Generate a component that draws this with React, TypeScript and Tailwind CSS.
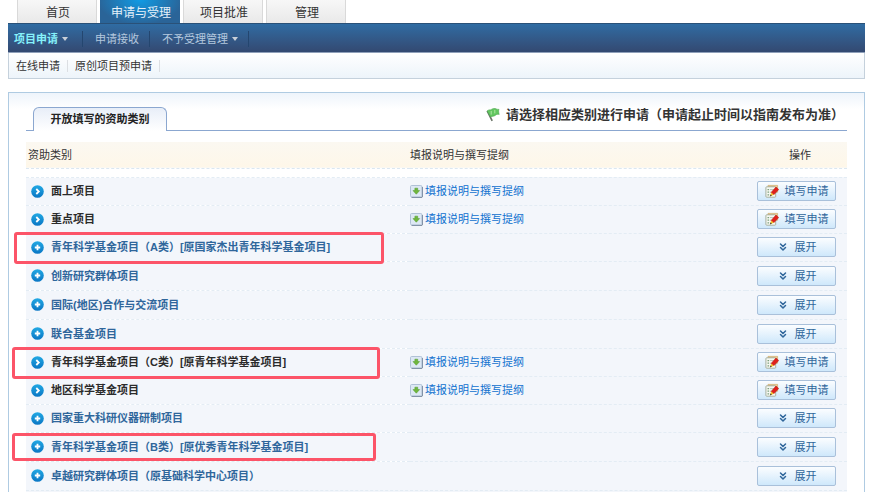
import { ChevronsDown } from 'lucide-react';

interface Category {
  name: string;
  kind: 'leaf' | 'group';
  // position of the red marker frame around the name
  marker?: string;
}

const TABS = ['首页', '申请与受理', '项目批准', '管理'];

const MENU = [
  { label: '项目申请', hasMenu: true },
  { label: '申请接收', hasMenu: false },
  { label: '不予受理管理', hasMenu: true },
];

const SUBMENU = ['在线申请', '原创项目预申请'];

const CATEGORIES: Category[] = [
  { name: '面上项目', kind: 'leaf' },
  { name: '重点项目', kind: 'leaf' },
  { name: '青年科学基金项目（A类）[原国家杰出青年科学基金项目]', kind: 'group', marker: '-left-3 -top-0.5 h-8 w-[370px]' },
  { name: '创新研究群体项目', kind: 'group' },
  { name: '国际(地区)合作与交流项目', kind: 'group' },
  { name: '联合基金项目', kind: 'group' },
  { name: '青年科学基金项目（C类）[原青年科学基金项目]', kind: 'leaf', marker: '-left-3.5 -top-0.5 h-8 w-[368px]' },
  { name: '地区科学基金项目', kind: 'leaf' },
  { name: '国家重大科研仪器研制项目', kind: 'group' },
  { name: '青年科学基金项目（B类）[原优秀青年科学基金项目]', kind: 'group', marker: '-left-3.5 top-0 h-7 w-[364px]' },
  { name: '卓越研究群体项目（原基础科学中心项目）', kind: 'group' },
];

function BulletIcon({ kind }: { kind: Category['kind'] }) {
  return (
    <svg viewBox="0 0 13 13" className="size-[13px] shrink-0" aria-hidden="true">
      <defs>
        <linearGradient id={`bullet-${kind}`} x1="0" y1="0" x2="0" y2="1">
          <stop offset="0" stopColor="#22a9e4" />
          <stop offset="1" stopColor="#0a76c4" />
        </linearGradient>
      </defs>
      <circle cx="6.5" cy="6.5" r="6.3" fill={`url(#bullet-${kind})`} />
      {kind === 'group' ? (
        <path d="M6.5 3.8v5.4M3.8 6.5h5.4" stroke="#fff" strokeWidth="1.8" fill="none" />
      ) : (
        <path d="M5.3 4l2.5 2.5L5.3 9" stroke="#fff" strokeWidth="1.8" fill="none" />
      )}
    </svg>
  );
}

function DownloadIcon() {
  return (
    <svg viewBox="0 0 13 13" className="size-[13px] shrink-0" aria-hidden="true">
      <path d="M1.6 12.4h9.8a1 1 0 0 0 1-1V2" stroke="#56677d" strokeWidth="1" fill="none" />
      <rect x="0.5" y="0.5" width="11.4" height="11.4" rx="1.2" fill="#dde8f4" stroke="#b0c1d6" />
      <path d="M4.9 3.2h2.8v2.4h1.9L6.3 9.2 3 5.6h1.9z" fill="#6fb63c" stroke="#57a031" strokeWidth="0.6" />
    </svg>
  );
}

function EditIcon() {
  return (
    <svg viewBox="0 0 14 14" className="size-3.5 shrink-0" aria-hidden="true">
      <path d="M3 1.4h9.6v6.8h-2V3H3z" fill="#f0d095" stroke="#d0ab68" strokeWidth="0.7" />
      <rect x="0.9" y="2.8" width="9.8" height="10.4" rx="0.8" fill="#f6f8f2" stroke="#a0a996" strokeWidth="0.9" />
      <path d="M2.6 5.6h1.2M2.6 8.2h1.2M2.6 10.8h1.2" stroke="#5e8a62" strokeWidth="1.2" />
      <path d="M4.8 5.6h4M4.8 8.2h2M4.8 10.8h1" stroke="#b3bbb0" strokeWidth="0.9" />
      <path d="M11 3l2.7 2.5-4.9 5.3-2.7-2.4z" fill="#e0201b" stroke="#b01713" strokeWidth="0.5" />
      <path d="M6.1 8.4l2.7 2.4-3.6 1.5z" fill="#f6c52c" />
      <path d="M5.7 10.6l1.1 1-1.9.9z" fill="#222" />
    </svg>
  );
}

function FlagIcon() {
  return (
    <svg viewBox="0 0 14 14" className="size-3.5 shrink-0" aria-hidden="true">
      <path d="M1.2 2.8l5 10" stroke="#6b7468" strokeWidth="1.7" fill="none" />
      <path
        d="M1.2 3C2.6 1.4 4 2.3 5.4 1.4 6.8.5 8.6 0 10.2.9c1 .5 1.9.5 2.8.5-.8 1.8-.2 3.4.2 5-1.6-.5-3 0-4 1-1.2 1.1-2.8.4-4.6 1.6z"
        fill="#62c660"
        stroke="#4aa84e"
        strokeWidth="0.6"
      />
      <path d="M5.2 3v3.6M8.8 2v3.4" stroke="#aee6a2" strokeWidth="1" />
    </svg>
  );
}

function CategoryRow({ category, tall }: { category: Category; tall: boolean }) {
  const isGroup = category.kind === 'group';
  return (
    <tr className={`border-t border-dashed border-[#e3ecf4] ${tall ? 'h-[29px]' : 'h-7'}`}>
      <td className="relative p-0">
        <a
          href="#"
          className={`flex items-center gap-[7px] pl-[5px] font-bold whitespace-nowrap ${isGroup ? 'text-[#2f669b]' : 'text-[#2b2b2b]'}`}
        >
          <BulletIcon kind={category.kind} />
          {category.name}
        </a>
        {category.marker && (
          <span className={`pointer-events-none absolute rounded-[3px] border-3 border-[#fc5468] ${category.marker}`} />
        )}
      </td>
      <td className="p-0">
        {!isGroup && (
          <a href="#" className="flex items-center gap-0.5 text-[#0f70cf]">
            <DownloadIcon />
            填报说明与撰写提纲
          </a>
        )}
      </td>
      <td className="p-0">
        <button
          type="button"
          className="mr-[11px] ml-auto flex h-5 w-[79px] items-center justify-center gap-1.5 rounded-xs border border-[#a9c0da] bg-linear-to-b from-[#fbfdff] to-[#cfe8fb] text-[#2f669b]"
        >
          {isGroup ? <ChevronsDown className="size-3" strokeWidth={3} /> : <EditIcon />}
          {isGroup ? '展开' : '填写申请'}
        </button>
      </td>
    </tr>
  );
}

export default function App() {
  return (
    <div className="flex min-h-screen flex-col bg-white pl-2 pr-[5px] font-['Liberation_Sans','Noto_Sans_CJK_SC',sans-serif] text-[11px] leading-4 text-[#333]">
      <header>
        <nav className="flex gap-[3px] pl-[9px]">
          {TABS.map((tab, i) => (
            <a
              key={tab}
              href="#"
              className={`flex h-[23px] w-20 items-center justify-center pl-0.5 pt-0.5 text-xs ${
                i === 1
                  ? 'bg-[radial-gradient(ellipse_at_top,#109be4,#2a6498_75%)] text-[#e6f1fa]'
                  : 'border-x border-[#d9d9d9] bg-linear-to-b from-[#f7f7f7] to-[#e9e9e9]'
              }`}
            >
              {tab}
            </a>
          ))}
        </nav>

        <nav className="flex h-[30px] items-center border-y border-t-[#2a5178] border-b-[#8fa0ba] bg-linear-to-b from-[#2f6ca3] to-[#334971] pt-px text-[#b4c8de]">
          {MENU.map((item, i) => (
            <a
              key={item.label}
              href="#"
              className={`flex h-4 items-center gap-1 border-r border-[#24466f] ${
                i === 0 ? 'pl-1.5 pr-3.5 font-bold text-[#86f2fb]' : 'pl-3 pr-2.5'
              }`}
            >
              {item.label}
              {item.hasMenu && <span className="border-x-3 border-t-4 border-x-transparent border-t-[#c9d0d8]" />}
            </a>
          ))}
        </nav>

        <nav className="flex h-[26px] items-center border border-t-0 border-[#c5d1dc] bg-linear-to-b from-white to-[#edf4fa]">
          {SUBMENU.map(item => (
            <a key={item} href="#" className="flex h-3 items-center border-r border-[#dcdfe3] px-[7px]">
              {item}
            </a>
          ))}
        </nav>
      </header>

      <main className="mt-[13px] flex grow flex-col border border-b-0 border-[#afcbe2] bg-[linear-gradient(#eef4fb,#ffffff_16px)] px-[17px] pt-[13px]">
        <div className="flex items-end justify-between border-b border-[#8ba7d0] pl-[7px]">
          <h2 className="-mb-px flex h-6 w-[134px] items-center justify-center rounded-t-md border border-b-0 border-[#8ba7d0] bg-linear-to-b from-[#e8eef8] to-white pb-0.5 font-bold text-[#222]">
            开放填写的资助类别
          </h2>
          <p className="flex h-6 items-center gap-1.5 pr-[3px] pb-1.5 text-[13px] font-bold">
            <FlagIcon />
            请选择相应类别进行申请（申请起止时间以指南发布为准）
          </p>
        </div>

        <div className="flex grow flex-col pt-[11px]">
          <table className="w-full table-fixed border-collapse">
            <thead>
              <tr className="h-[26px] border-b border-dashed border-[#dbe7f1] bg-linear-to-b from-[#fbf8f1] to-[#fef7e9] text-left">
                <th className="w-[384px] p-0 pl-0.5 font-normal">资助类别</th>
                <th className="p-0 font-normal">填报说明与撰写提纲</th>
                <th className="w-[101px] p-0 pr-9 text-right font-normal">操作</th>
              </tr>
              <tr className="h-[9px]" />
            </thead>
            <tbody className="bg-[#f3f6fb]">
              {CATEGORIES.map((category, i) => (
                <CategoryRow
                  key={category.name}
                  category={category}
                  tall={category.kind === 'group' && CATEGORIES[i - 1]?.kind === 'group'}
                />
              ))}
            </tbody>
          </table>
          <div className="grow border-t border-dashed border-[#e3ecf4] bg-[#f3f6fb]" />
        </div>
      </main>
    </div>
  );
}
